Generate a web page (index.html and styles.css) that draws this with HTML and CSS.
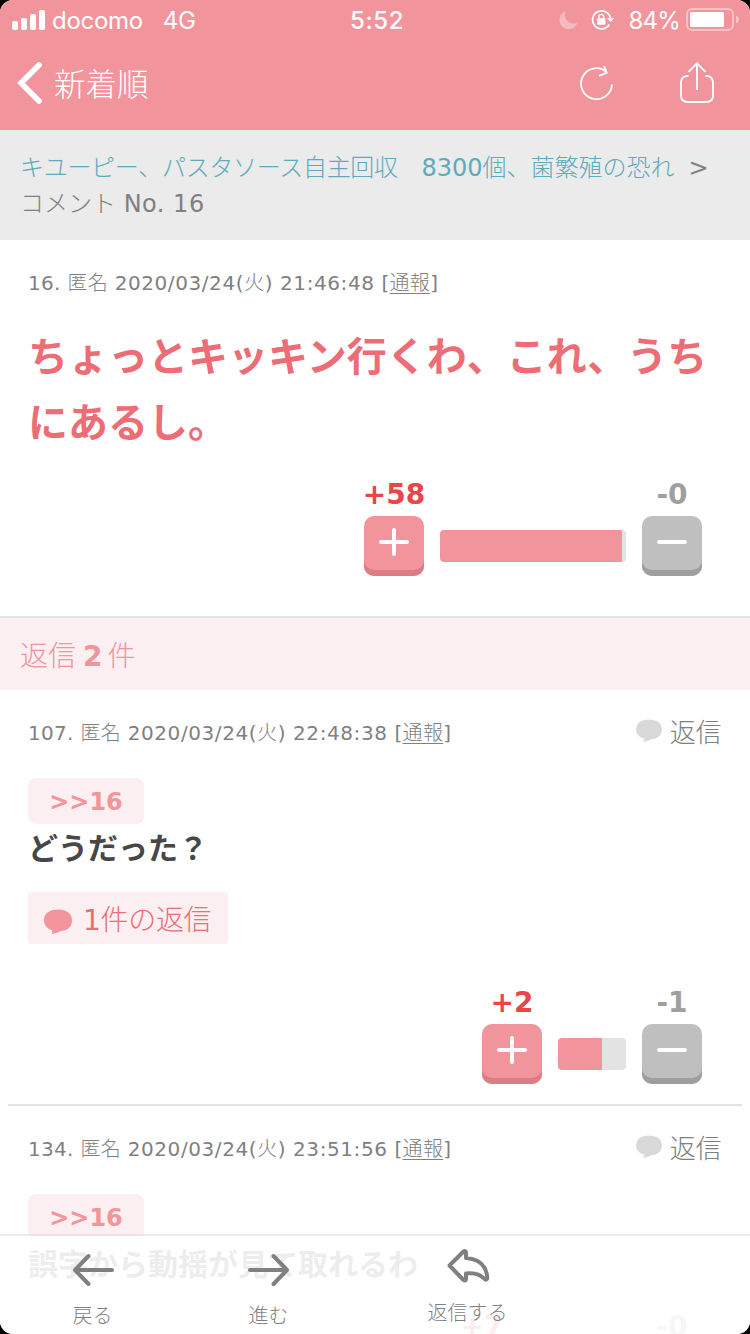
FILE: index.html
```html
<!DOCTYPE html>
<html lang="ja">
<head>
<meta charset="utf-8">
<title>コメント No. 16</title>
<link rel="stylesheet" href="styles.css">
</head>
<body>
<svg class="defs" aria-hidden="true">
  <symbol id="bubble" viewBox="0 0 28 25"><path d="M14 0.5C5 0.5 0 4.8 0 11.2c0 5 3.300 8.600 8.300 10.100C8.600 22.600 8.300 23.700 7.800 24.900c3.700-.5 6.500-1.700 8.800-3C23.500 21.900 28 17.700 28 11.200 28 4.800 23 .5 14 .5z"/></symbol>
</svg>
<div class="screen">
  <header class="header">
    <div class="status">
      <div class="status-side">
        <svg class="signal" viewBox="0 0 34 20" width="34" height="20"><rect x="0" y="11" width="6" height="9" rx="1.800"/><rect x="9" y="8" width="6" height="12" rx="1.800"/><rect x="18" y="4" width="6" height="16" rx="1.800"/><rect x="27" y="0" width="6" height="20" rx="1.800"/></svg>
        <span class="carrier">docomo</span><span class="net">4G</span>
      </div>
      <span class="clock">5:52</span>
      <div class="status-side status-right">
        <svg class="moon" viewBox="0 0 20 20" width="20" height="20"><path d="M6.500 1C2.500 2.800.5 6 .5 10c0 5 4 9 9 9 4 0 7.400-2 8.800-6C11 15.500 4 9.500 6.500 1z"/></svg>
        <svg class="lock" viewBox="0 0 24 22" width="24" height="22"><path d="M18.300 15.500A9 9 0 1 1 19.400 9" fill="none" stroke="#fff" stroke-width="1.800"/><path d="M16 9.300h7.500L19.600 13z" fill="#fff"/><rect x="6.200" y="9.200" width="8.200" height="6.600" rx="1" fill="#fff"/><path d="M7.900 9.500V7.700a2.400 2.400 0 0 1 4.800 0v1.800" fill="none" stroke="#fff" stroke-width="1.300"/></svg>
        <span class="percent">84%</span>
        <svg class="battery" viewBox="0 0 54 24" width="54" height="24"><rect x="1" y="1" width="46" height="21" rx="5" fill="none" stroke="#fff" stroke-opacity=".42" stroke-width="2"/><rect x="4" y="4" width="34" height="15" rx="1.500" fill="#fff"/><path d="M50 7.500c4 1.500 4 6.500 0 8z" fill="#fff" fill-opacity=".45"/></svg>
      </div>
    </div>
    <nav class="nav">
      <svg class="back" viewBox="0 0 26 42" width="26" height="42"><path d="M22 3L4 21l18 18" fill="none" stroke="#fff" stroke-width="5.600" stroke-linecap="round" stroke-linejoin="miter"/></svg>
      <span class="nav-title">新着順</span>
      <svg class="reload" viewBox="0 0 34 36" width="34" height="36"><path d="M32 19.500A15.500 15.500 0 1 1 26 6.400M24 1l2.700 6.700L19 11" fill="none" stroke="#fff" stroke-width="1.900"/></svg>
      <svg class="share" viewBox="0 0 34 42" width="34" height="42"><path d="M8.500 14H7a6 6 0 0 0-6 6v14a6 6 0 0 0 6 6h20a6 6 0 0 0 6-6V20a6 6 0 0 0-6-6h-1.500M17 28V2M8.500 9.800L17 1.300l8.500 8.500" fill="none" stroke="#fff" stroke-width="1.900"/></svg>
    </nav>
  </header>
  <div class="crumb">
    <div><a class="topic"><span class="jp tight">キユーピー、パスタソース自主回収　</span>8300<span class="jp">個、菌繁殖の恐れ</span></a><span class="sep">&gt;</span></div>
    <div><span class="jp">コメント</span> <span class="no">No. 16</span></div>
  </div>
  <main>
    <article class="comment lead">
      <div class="meta"><span>16. <span class="jp">匿名</span> <span class="date">2020/03/24(<span class="jp">火</span>) 21:46:48 </span>[<u class="jp">通報</u>]</span></div>
      <p class="lead-text">ちょっとキッキン行くわ、これ、うち<br>にあるし。</p>
      <div class="votes">
        <div class="vote up"><b>+58</b><span class="btn"><svg viewBox="0 0 30 28" width="30" height="28"><path d="M2 14h26M15 2v24"/></svg></span></div>
        <div class="bar"><i style="width:182px"></i><em style="width:4px"></em></div>
        <div class="vote down"><b>-0</b><span class="btn"><svg viewBox="0 0 30 28" width="30" height="28"><path d="M2 14h26"/></svg></span></div>
      </div>
    </article>
    <h2 class="replies"><span class="jp">返信</span><b>2</b><span class="jp">件</span></h2>
    <article class="comment reply">
      <div class="meta"><span>107. <span class="jp">匿名</span> <span class="date">2020/03/24(<span class="jp">火</span>) 22:48:38 </span>[<u class="jp">通報</u>]</span><a class="answer"><svg width="26" height="23"><use href="#bubble"/></svg>返信</a></div>
      <a class="anchor">&gt;&gt;16</a>
      <p class="text">どうだった？</p>
      <a class="thread"><svg width="28" height="25"><use href="#bubble"/></svg><span>1<span class="jp">件の返信</span></span></a>
      <div class="votes">
        <div class="vote up"><b>+2</b><span class="btn"><svg viewBox="0 0 30 28" width="30" height="28"><path d="M2 14h26M15 2v24"/></svg></span></div>
        <div class="bar"><i style="width:44px"></i><em style="width:24px"></em></div>
        <div class="vote down"><b>-1</b><span class="btn"><svg viewBox="0 0 30 28" width="30" height="28"><path d="M2 14h26"/></svg></span></div>
      </div>
    </article>
    <article class="comment reply">
      <div class="meta"><span>134. <span class="jp">匿名</span> <span class="date">2020/03/24(<span class="jp">火</span>) 23:51:56 </span>[<u class="jp">通報</u>]</span><a class="answer"><svg width="26" height="23"><use href="#bubble"/></svg>返信</a></div>
      <a class="anchor">&gt;&gt;16</a>
      <p class="text">誤字から動揺が見て取れるわ</p>
      <div class="votes last">
        <div class="vote up"><b>+7</b><span class="btn"></span></div>
        <div class="bar"><i style="width:98px"></i></div>
        <div class="vote down"><b>-0</b><span class="btn"></span></div>
      </div>
    </article>
  </main>
  <footer class="toolbar">
    <a class="tool prev"><svg width="44" height="36" viewBox="0 0 44 36"><path d="M17.500 4L4 18l13.500 14M5 18h36"/></svg><span>戻る</span></a>
    <a class="tool next"><svg width="44" height="36" viewBox="0 0 44 36"><path d="M26.500 4L40 18 26.500 32M39 18H3"/></svg><span>進む</span></a>
    <a class="tool respond"><svg width="44" height="38" viewBox="0 0 44 38"><path d="M20 5.500Q19.500 3 17.500 4.500L3.500 18.500l14 14.500q2 1.500 2.500-1V26.500c7-1 13-.5 18 5 1.800 2 3.500 1.500 3.200-1C40.500 19 33 12 20 11z"/></svg><span>返信する</span></a>
  </footer>
</div>
</body>
</html>
```

FILE: styles.css
```css
* { box-sizing: border-box; }
body { margin: 0; background: #000; font-family: "DejaVu Sans", "Noto Sans CJK JP", sans-serif; color: #808080; }
.defs { position: absolute; width: 0; height: 0; }
svg { display: block; flex: none; }
p, h2 { margin: 0; }
.jp { font-family: "Noto Sans CJK JP", sans-serif; font-weight: 300; }
.screen { position: relative; width: 750px; height: 1334px; overflow: hidden; border-radius: 13px; background: #fff; }

.header { height: 130px; background: #f1949b; color: #fff; }
.status { height: 40px; display: flex; font-family: Inter, sans-serif; font-size: 24px; line-height: 42px; }
.status-side { width: 350px; display: flex; align-items: center; padding-left: 12px; }
.carrier, .net, .percent { padding-top: 2px; }
.signal { fill: #fff; }
.carrier { margin-left: 6px; letter-spacing: -.3px; }
.net { margin-left: 20px; letter-spacing: -.4px; }
.clock { width: 54px; text-align: center; font-weight: 500; letter-spacing: .6px; white-space: nowrap; }
.status-right { width: 346px; padding: 0 10px 0 0; justify-content: flex-end; }
.moon { fill: #fff; opacity: .35; margin-right: 12px; }
.lock { margin-right: 13px; }
.percent { margin-right: 6px; letter-spacing: -.8px; }
.nav { height: 90px; display: flex; align-items: center; padding: 0 36px 4px 17px; }
.nav-title { margin: -3px 0 0 11px; font: 300 31.500px/48px "Noto Sans CJK JP", sans-serif; flex: 1; }
.reload { margin-right: 66px; }

.crumb { height: 110px; padding: 18px 20px; background: #ebebeb; font-size: 24px; line-height: 36px; white-space: nowrap; }
.crumb div { height: 36px; }
.topic { color: #5eaabd; }
.tight { letter-spacing: -.3px; }
.no { letter-spacing: .5px; }
.sep { margin-left: 14px; }

.comment { padding-left: 28px; }
.lead { height: 378px; border-bottom: 2px solid #e3e3e3; padding-top: 22px; }
.meta { height: 40px; font-size: 20px; line-height: 40px; display: flex; align-items: center; white-space: pre; letter-spacing: .3px; }
.date { letter-spacing: .58px; }
.meta u { text-underline-offset: 3px; text-decoration-thickness: 1px; }
.lead-text { margin-top: 19px; font-family: "Noto Sans CJK JP", sans-serif; font-weight: 700; font-size: 40px; line-height: 66px; color: #ec6d75; white-space: nowrap; }
.votes { display: flex; justify-content: flex-end; align-items: flex-end; gap: 16px; padding-right: 48px; height: 100px; margin-top: 23px; }
.vote { width: 60px; display: flex; flex-direction: column; align-items: center; }
.vote b { font-size: 28px; line-height: 38px; height: 40px; color: #eb4449; }
.down b { color: #9f9f9f; }
.btn { width: 60px; height: 60px; border-radius: 10px; background: #f1949b; box-shadow: inset 0 -6px #dd7c84; display: flex; justify-content: center; padding-top: 12px; }
.down .btn { background: #bfbfbf; box-shadow: inset 0 -6px #9f9f9f; }
.btn path { fill: none; stroke: #fff; stroke-width: 4; stroke-linecap: round; }
.bar { display: flex; height: 32px; margin-bottom: 14px; border-radius: 4px; overflow: hidden; }
.bar i { background: #f1949b; }
.bar em { background: #e3e3e3; }

.replies { display: flex; gap: 7px; height: 72px; padding: 0 20px; background: #fceff1; color: #f1949b; font-size: 28px; line-height: 76px; font-weight: 400; }
.replies .jp { margin-top: -2px; }
.replies b { margin-right: -2px; padding-top: 1px; }
.reply { height: 416px; margin: 0 8px; padding: 22px 0 0 20px; border-bottom: 2px solid #e3e3e3; }
.reply .meta { justify-content: space-between; padding-right: 21px; }
.answer { display: flex; align-items: center; gap: 8px; font: 300 26px/36px "Noto Sans CJK JP", sans-serif; letter-spacing: -.4px; height: 40px; padding-bottom: 2px; }
.answer svg { margin-top: -1px; fill: #d9d9d9; }
.anchor { display: block; width: 116px; height: 46px; margin-top: 26px; border-radius: 8px; background: #fceff1; color: #f1949b; text-align: center; font-weight: 700; font-size: 24px; line-height: 48px; }
.text { height: 48px; font: 700 30px/45px "Noto Sans CJK JP", sans-serif; color: #474747; }
.thread { display: flex; align-items: center; width: 200px; height: 52px; margin-top: 20px; padding-left: 16px; gap: 11px; border-radius: 4px; background: #fceff1; color: #ec6d75; font-size: 28px; letter-spacing: -.3px; white-space: nowrap; }
.thread svg { fill: #f1949b; margin-top: 6px; }
.reply .votes { margin-top: 40px; padding-right: 40px; }
.reply .last { margin-top: 20px; }

.toolbar { position: absolute; left: 0; right: 0; bottom: 0; height: 100px; border-top: 2px solid rgba(227,227,227,.7); background: rgba(255,255,255,.9); background-clip: padding-box; display: flex; font: 300 20px/30px "Noto Sans CJK JP", sans-serif; }
.tool { width: 176px; display: flex; flex-direction: column; align-items: center; }
.tool path { fill: none; stroke: #808080; stroke-width: 4; stroke-linecap: round; stroke-linejoin: round; }
.prev, .next { padding-top: 16px; }
.prev { width: 185px; }
.next { width: 167px; }
.prev span, .next span { margin-top: 12px; }
.respond { width: 231px; padding-top: 11px; }
.respond span { margin-top: 12px; }
```
